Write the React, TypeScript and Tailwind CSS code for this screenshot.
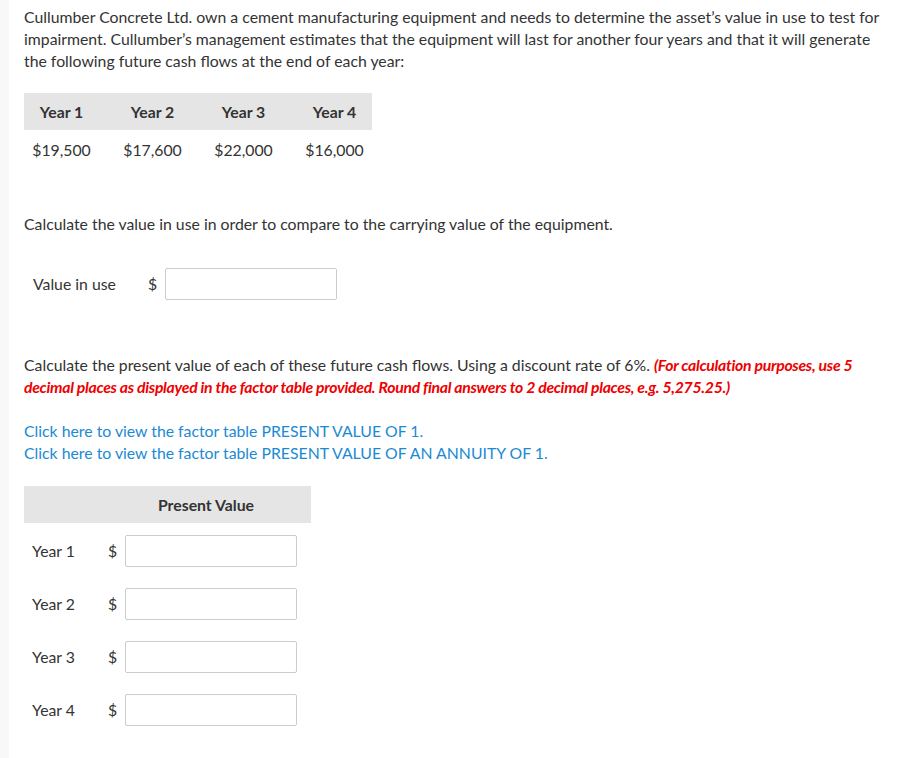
import React from "react";

const Input = ({ w = "w-[172px]" }: { w?: string }) => (
  <div className={`${w} h-[32px] border border-[#cccccc] rounded-[2px] bg-white`} />
);

export default function App() {
  const years = ["Year 1", "Year 2", "Year 3", "Year 4"];
  const values = ["$19,500", "$17,600", "$22,000", "$16,000"];
  return (
    <div
      className="flex min-h-[758px] w-[905px] bg-white text-[15.8px] text-[#333333]"
      style={{ fontFamily: "Lato, 'Open Sans', sans-serif" }}
    >
      <div className="w-[9px] shrink-0 bg-[#f8f8f8]" />
      <div className="flex-1 pl-[15px] pr-[10px] pt-[6px]">
        <p className="leading-[22px] w-[864px]">
          Cullumber Concrete Ltd. own a cement manufacturing equipment and needs to determine the asset’s value in use to test for impairment. Cullumber’s management estimates that the equipment will last for another four years and that it will generate the following future cash flows at the end of each year:
        </p>

        <div className="mt-[21px] w-[348px]">
          <div className="flex h-[37px] items-center gap-[16px] bg-[#e5e5e5]">
            {years.map((y) => (
              <div key={y} className="w-[75px] text-center font-bold whitespace-nowrap text-[#333333]">
                {y}
              </div>
            ))}
          </div>
          <div className="flex h-[40px] items-center gap-[16px]">
            {values.map((v) => (
              <div key={v} className="w-[75px] text-center whitespace-nowrap">
                {v}
              </div>
            ))}
          </div>
        </div>

        <p className="mt-[43px] leading-[22px]">
          Calculate the value in use in order to compare to the carrying value of the equipment.
        </p>

        <div className="mt-[33px] flex items-center">
          <span className="ml-[9px] w-[115px]">Value in use</span>
          <span className="w-[17px]">$</span>
          <Input />
        </div>

        <p className="mt-[54px] leading-[22px] w-[864px]">
          Calculate the present value of each of these future cash flows. Using a discount rate of 6%.{" "}
          <span className="font-bold italic text-[#ee0000] tracking-[-0.3px]">
            (For calculation purposes, use 5 decimal places as displayed in the factor table provided. Round final answers to 2 decimal places, e.g. 5,275.25.)
          </span>
        </p>

        <div className="mt-[22px] leading-[22px] text-[#1a8ad4]">
          <div>Click here to view the factor table PRESENT VALUE OF 1.</div>
          <div>Click here to view the factor table PRESENT VALUE OF AN ANNUITY OF 1.</div>
        </div>

        <div className="mt-[22px] w-[287px]">
          <div className="flex h-[37px] items-center bg-[#e5e5e5]">
            <div className="w-[96px]" />
            <div className="w-[172px] text-center font-bold">Present Value</div>
          </div>
          <div className="mt-[12px] flex flex-col gap-[21px]">
            {years.map((y) => (
              <div key={y} className="flex items-center">
                <span className="ml-[8px] w-[76px]">{y}</span>
                <span className="w-[17px]">$</span>
                <Input />
              </div>
            ))}
          </div>
        </div>
      </div>
    </div>
  );
}
